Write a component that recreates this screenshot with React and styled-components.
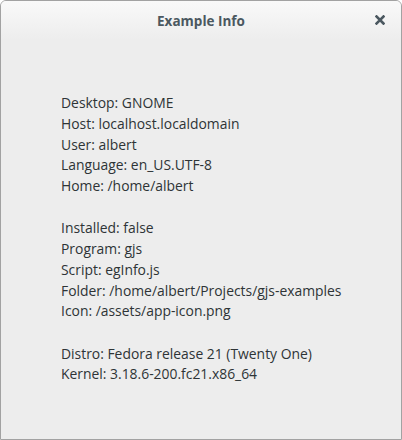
import React from "react";
import styled, {createGlobalStyle} from "styled-components";

const GlobalStyle = createGlobalStyle`
    html, body {
        margin: 0;
        padding: 0;
        background: #ffffff;
    }
`;

const Window = styled.div`
    width: 402px;
    height: 440px;
    box-sizing: border-box;
    border: 1px solid #a2a2a2;
    border-radius: 6px 6px 0 0;
    background-color: #ededed;
    font-family: "Open Sans", "Noto Sans", sans-serif;
    display: flex;
    flex-direction: column;
    overflow: hidden;
`;

const TitleBar = styled.div`
    height: 39px;
    flex: 0 0 auto;
    display: flex;
    align-items: center;
    justify-content: center;
    position: relative;
    background: linear-gradient(#f9f9f9, #ededed);
`;

const Title = styled.span`
    font-size: 13.5px;
    font-weight: 700;
    color: #4b5860;
`;

const CloseButton = styled.button`
    position: absolute;
    right: 13px;
    top: 10px;
    width: 16px;
    height: 18px;
    padding: 0;
    border: none;
    background: none;
    display: flex;
    align-items: center;
    justify-content: center;
`;

const Content = styled.div`
    padding: 53px 0 0 60px;
    display: flex;
    flex-direction: column;
    gap: 21.6px;
`;

const Group = styled.div`
    display: flex;
    flex-direction: column;
`;

const Line = styled.div`
    font-size: 13.9px;
    line-height: 20.75px;
    color: #2e3436;
    white-space: nowrap;
`;

const groups = [
    [
        "Desktop: GNOME",
        "Host: localhost.localdomain",
        "User: albert",
        "Language: en_US.UTF-8",
        "Home: /home/albert",
    ],
    [
        "Installed: false",
        "Program: gjs",
        "Script: egInfo.js",
        "Folder: /home/albert/Projects/gjs-examples",
        "Icon: /assets/app-icon.png",
    ],
    [
        "Distro: Fedora release 21 (Twenty One)",
        "Kernel: 3.18.6-200.fc21.x86_64",
    ],
];

const App = () => {
    return (
        <>
            <GlobalStyle/>
            <Window>
                <TitleBar>
                    <Title>Example Info</Title>
                    <CloseButton aria-label="Close">
                        <svg width="10" height="10" viewBox="0 0 10 10">
                            <path d="M1.5 1.5 L8.5 8.5 M8.5 1.5 L1.5 8.5" stroke="#4b5860" strokeWidth="2.6" strokeLinecap="square"/>
                        </svg>
                    </CloseButton>
                </TitleBar>
                <Content>
                    {groups.map((g, i) => (
                        <Group key={i}>
                            {g.map(t => <Line key={t}>{t}</Line>)}
                        </Group>
                    ))}
                </Content>
            </Window>
        </>
    );
};

export default App;
